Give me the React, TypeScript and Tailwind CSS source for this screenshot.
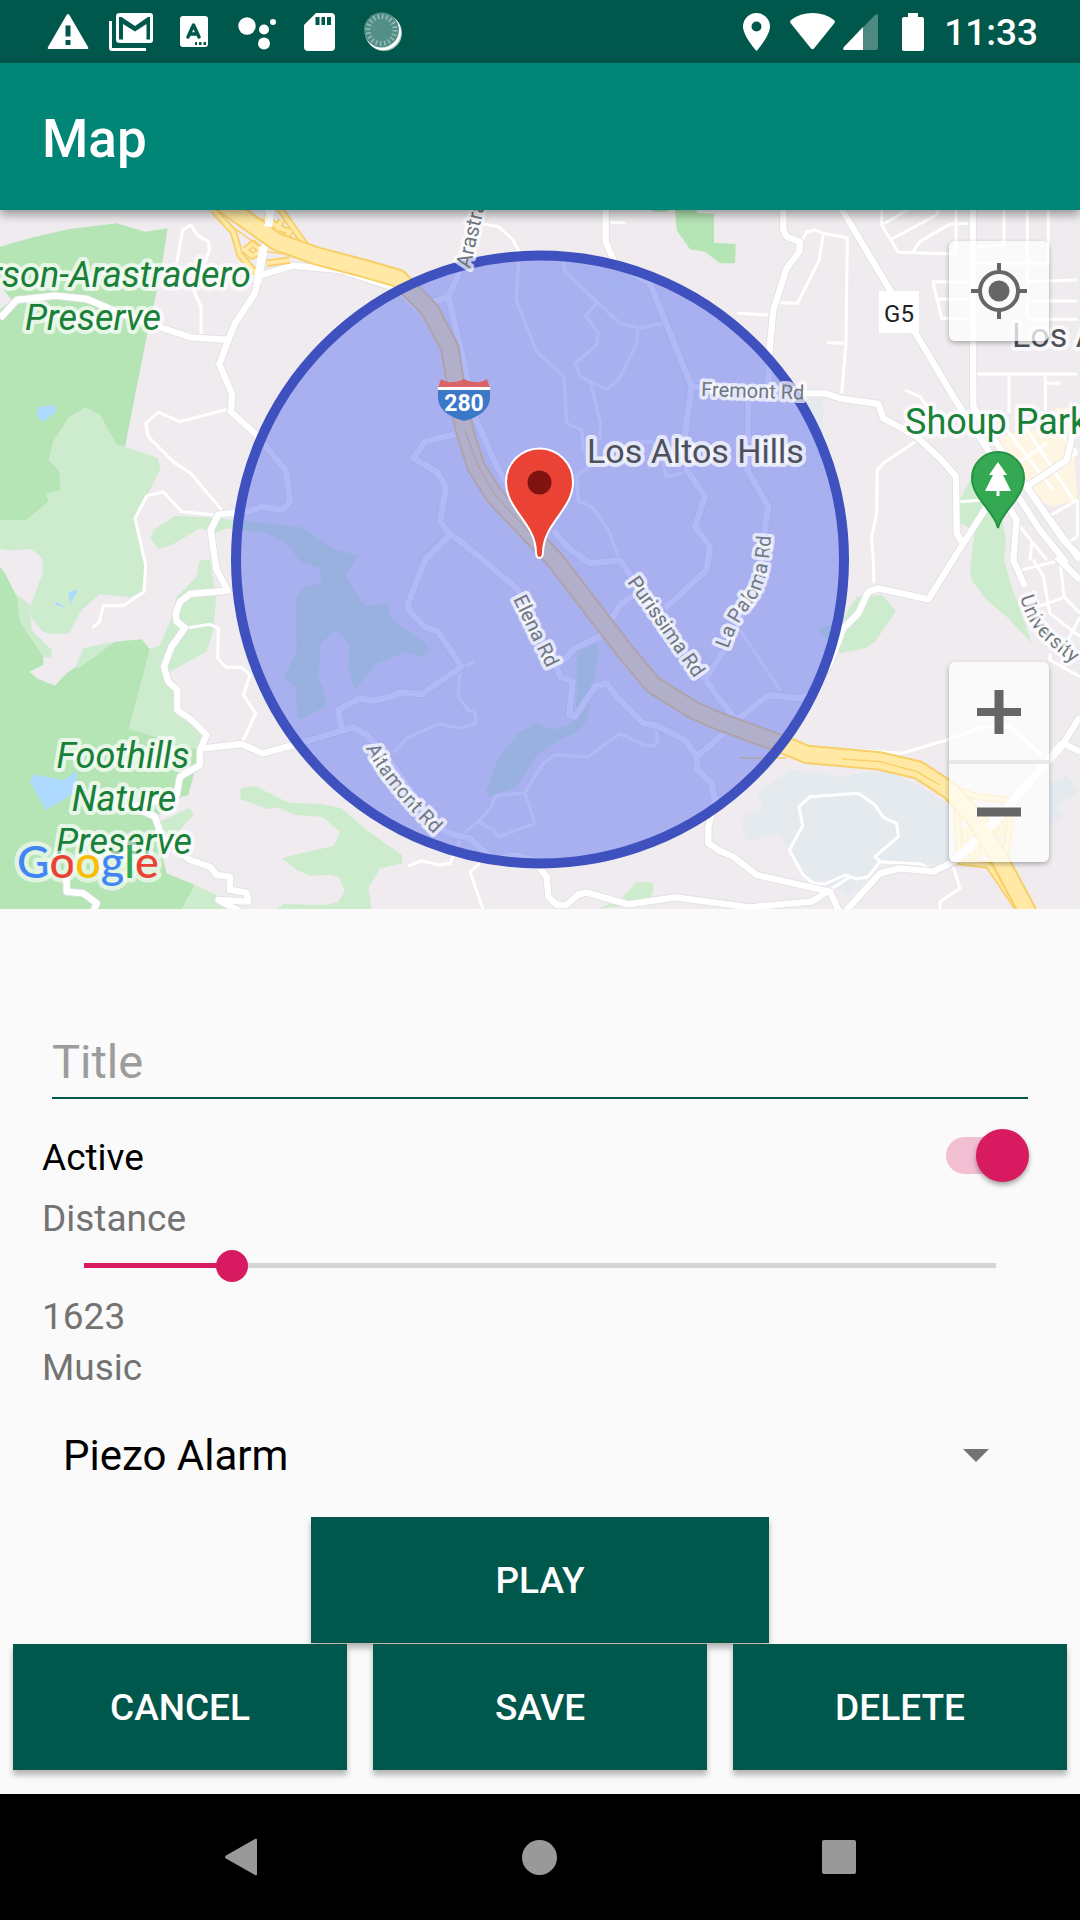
import React, { useState } from "react";

/* ---------- Map terrain (drawn on a 3x grid, scaled down by the parent group) ---------- */

const DARK_PARKS = [
  "M0,140 100,112 205,88 350,70 435,95 503,85 480,230 440,410 375,740 350,735 300,645 255,622 205,655 160,725 147,780 178,812 183,870 140,880 145,905 80,960 0,960 0,330 35,300 0,255Z",
  "M0,1100 15,1120 60,1210 60,1260 130,1370 130,1395 88,1415 110,1435 165,1457 200,1420 345,1325 425,1318 450,1348 388,1585 440,1602 600,1650 565,1785 530,1795 460,1860 470,1900 500,2020 585,2055 545,2127 0,2127Z",
  "M2025,30 2030,90 2070,148 2115,155 2160,190 2205,190 2207,132 2142,128 2142,42 2092,38 2090,30Z",
  "M1955,30 2005,30 2000,35 1960,35Z",
];

const LIGHT_PARKS = [
  "M375,740 472,773 482,805 440,890 405,955 440,1100 435,1170 390,1192 300,1182 245,1230 225,1265 208,1300 155,1302 130,1295 95,1255 90,1220 128,1120 128,1080 115,1062 90,1047 35,1052 0,1046 0,960 80,960 145,905 140,880 183,870 178,812 147,780 160,725 205,655 255,622 300,645 350,735Z",
  "M600,1080 630,1080 648,1200 640,1290 620,1355 510,1415 520,1480 530,1540 620,1610 600,1650 440,1602 388,1588 450,1348 480,1335 520,1240 530,1190 590,1130Z",
  "M40,1175 90,1215 95,1290 155,1350 155,1375 130,1370 60,1265 50,1190Z",
  "M228,1398 250,1345 345,1325 232,1408Z",
  "M470,1870 570,1823 580,1845 520,1910 480,1940Z",
  "M585,2055 650,2085 730,2127 545,2127Z",
  "M452,1015 460,990 525,948 640,953 905,982 1000,1045 1075,1068 1037,1125 1080,1200 1100,1217 1165,1210 1165,1240 1195,1275 1275,1325 1290,1350 1265,1372 1220,1355 1130,1390 1065,1470 1045,1410 1048,1335 1008,1290 963,1330 955,1430 975,1480 978,1518 910,1556 892,1550 888,1465 853,1435 890,1350 888,1200 905,1165 963,1147 960,1105 900,1085 865,1035 800,1000 730,990 680,985 645,1000 600,985 515,1035 475,1048Z",
  "M1730,1350 1785,1325 1798,1350 1782,1425 1780,1460 1760,1560 1740,1590 1660,1630 1610,1665 1550,1760 1465,1792 1458,1775 1495,1675 1560,1595 1610,1570 1655,1590 1720,1570 1732,1480Z",
  "M722,1765 765,1758 865,1808 965,1812 1025,1825 1100,1890 1205,1965 1208,1990 1140,2005 1105,2065 1115,2127 830,2127 850,2112 975,2115 1015,2105 1035,2070 1015,2030 985,2025 930,2027 890,2010 845,1975 880,1965 1000,1938 1020,1895 965,1850 885,1845 835,1822 805,1828 722,1798Z",
  "M1795,2127 1870,2090 1910,2045 1958,2048 1960,2080 1930,2110Z",
  "M2910,840 2960,850 3000,920 3018,1020 3012,1080 3035,1160 3065,1240 3095,1330 3020,1250 2960,1200 2915,1140 2910,1110 2925,990 2878,970 2880,900Z",
  "M2570,1190 2645,1185 2688,1232 2625,1325 2595,1345 2520,1360 2490,1330 2450,1285 2520,1270Z",
  "M2257,1848 2298,1827 2330,1880 2288,1905Z",
];

const CAMPUSES = [
  "M1835,210 1930,250 1875,300 1790,245Z",
  "M2415,600 2468,590 2470,650 2460,810 2410,800 2400,640Z",
  "M2370,1710 2440,1715 2520,1730 2600,1715 2670,1720 2760,1760 2850,1820 2850,1990 2780,1995 2640,1985 2600,2030 2580,2060 2545,2090 2500,2060 2460,2050 2400,2020 2370,1950 2330,1900 2240,1925 2225,1870 2235,1845 2290,1820 2270,1780Z",
  "M3150,1750 3200,1725 3235,1775 3170,1820 3190,1850 3150,1875Z",
];

const PONDS = [
  "M118,620 165,615 168,635 128,667 110,645Z",
  "M205,1177 235,1168 210,1212Z",
  "M165,1202 197,1223 168,1215Z",
  "M90,1745 100,1723 190,1740 230,1712 232,1770 190,1800 138,1830Z",
];

const DOWNTOWN =
  "M2990,720 3060,690 3160,680 3165,622 3210,625 3222,740 3232,900 3160,920 3120,905 3090,870 3060,850Z";

const ROADS = [
  "M812,20 790,170 775,230 765,280 705,370 685,420 658,492 697,585 692,635 770,705 858,812 870,905 845,930 785,920 745,935 655,943 632,990 645,1080 650,1110 683,1172 570,1182 540,1205 527,1240 530,1265 555,1283 515,1340 492,1400 505,1445 532,1470 532,1530 575,1560 620,1605 600,1650 600,1695 540,1730 530,1785 400,1820 465,1850 485,1910 570,1980 630,2000 650,2025 690,2030 690,2070 740,2078 745,2105 655,2100 720,2135",
  "M0,355 50,300 165,287 260,297 350,335 490,385 570,412 690,420",
  "M785,225 875,197 1020,210 1140,250 1190,265 1255,330",
  "M610,1645 725,1632 788,1660 900,1630 1060,1582 1100,1605 1160,1670 1310,1880 1350,1900 1410,1915 1480,1980 1540,1965 1600,1980 1640,2030 1645,2090 1670,2115 1700,2115 1735,2083 1760,2078 1885,2113 2025,2092 2250,2122 2435,2105 2490,2070",
  "M200,2030 200,2075 250,2080 290,2110 280,2135",
  "M1025,1585 1015,1530 1080,1495 1120,1502 1175,1490 1200,1477 1265,1482 1385,1400 1315,1295 1275,1280 1225,1230 1225,1210 1275,1080 1350,1005 1320,965 1338,860 1310,815 1240,775 1275,725 1375,700",
  "M1350,1000 1450,1080 1550,1165 1670,1400 1680,1430 1718,1445 1708,1545 1725,1550 1785,1460 1820,1450 1850,1490 1930,1570 1970,1577 2055,1620 2090,1670 2092,1710 2135,1750 2145,1800 2125,1880 2125,1930 2160,1953 2200,1970 2270,2025 2490,2075 2515,2130",
  "M1670,1400 1725,1345 1800,1310 1865,1210 1900,1185",
  "M1660,990 1700,1040 1770,1090 1860,1080 1900,1140 2110,1430 2160,1500 2210,1560 2305,1485 2400,1495 2430,1485 2490,1390 2530,1285 2575,1240 2605,1175 2635,1165 2785,1198 2865,1070 2960,920",
  "M1995,1225 2120,1110 2130,1040 2085,980 2115,890 2060,810 2055,700 2075,560 1950,250 1845,190 1817,125 1817,25",
  "M2090,1670 2160,1610 2210,1560",
  "M2075,560 2160,568 2410,580 2475,580 2520,595 2635,612 2650,655 2750,710 2825,780 2868,830 2870,1000 2885,1025",
  "M2245,600 2242,810 2305,920 2280,1080 2260,1180 2180,1340 2120,1430",
  "M2350,25 2350,90 2360,110 2400,125 2398,155 2360,205 2320,330 2308,460 2305,560",
  "M1380,215 1345,290 1390,480 1425,650 1490,800 1540,880",
  "M1300,305 1345,290",
  "M2518,15 2860,590 2990,790 3120,990 3200,1090",
  "M2918,20 2920,620 3010,760 3150,960 3240,1080",
  "M3220,690 3200,780 3080,860 3190,1020 3240,1070",
  "M3020,910 3050,960 3040,1080 3075,1160",
  "M3170,1070 3240,1140",
  "M3240,1550 3190,1630 3030,1820 2860,1985 2800,2015 2700,2005 2640,2020 2540,2130",
  "M3190,1630 3240,1655",
];

const LANES = [
  "M530,190 548,90 572,75 592,105 625,125 628,150 600,235 580,270 603,320 603,405",
  "M680,628 540,665 475,637 437,670 445,710 525,790 572,820 665,930",
  "M645,945 545,935 490,875 440,888 405,955 437,1095 432,1175 370,1217 310,1217 298,1265 278,1283",
  "M565,1283 630,1273 655,1285 653,1375 678,1402 725,1402 750,1425 730,1485 767,1540 725,1630",
  "M1440,70 1495,80 1535,115 1558,155 1548,300 1610,455 1692,530 1700,670 1745,690 1752,760",
  "M1690,185 1695,215 1790,305 1860,370 1920,385 1990,370",
  "M1790,310 1757,347 1795,400 1790,435 1725,490 1740,530 1820,568 1855,540 1910,430 1913,390",
  "M1770,545 1802,670 1800,720",
  "M1770,800 1730,825 1735,905 1775,920 1825,990 1855,1070",
  "M1910,725 1955,725 1980,760 2000,830 2050,820",
  "M1830,68 1877,68",
  "M1380,1400 1375,1490 1405,1530 1427,1540 1425,1570 1385,1585 1315,1572 1220,1615 1180,1658",
  "M1385,1400 1422,1388",
  "M1965,1580 1973,1620 1965,1638 1930,1635 1860,1600 1765,1670 1665,1665 1630,1690 1575,1778 1485,1788 1475,1820 1435,1865 1390,1900 1350,1990 1315,1995 1265,1982 1225,1998",
  "M1435,1865 1480,1890 1498,1910 1605,1870 1575,1778",
  "M1440,1990 1410,2015 1450,2130",
  "M2220,1290 2340,1470",
  "M2622,1150 2620,1080 2615,1010 2630,940 2632,810 2650,790 2745,725",
  "M2560,1650 2705,1660 2840,1620 2950,1580 3030,1580 3130,1670",
  "M2397,1820 2430,1790 2575,1780 2625,1815 2650,1852 2690,1870 2695,1910 2625,1970 2640,1985 2605,2030 2570,2037 2535,2025 2475,2052 2440,2050 2410,2025 2368,1950 2408,1877Z",
  "M2640,1985 2760,1992 2780,2000",
  "M2475,2080 2550,2030",
  "M2860,2000 2880,2065 2820,2105 2820,2130",
  "M2405,125 2420,95 2445,90 2470,100 2542,113 2538,430 2525,580",
  "M2470,100 2458,180 2392,310 2335,308",
  "M2212,340 2305,345",
  "M2482,428 2532,430",
  "M2645,25 2645,75 2695,157 2868,162 2868,25",
  "M2645,75 2730,25",
  "M2670,120 2810,45 2818,25",
  "M2735,160 2760,125 2850,72 2910,70",
  "M2795,245 2905,247M2800,250 2825,355 2910,357M2815,298 2910,298",
  "M3012,25 3012,135 2930,140M3082,25 3082,358 3232,358M3145,25 3145,190 2930,190M3082,245 3232,240M3082,303 3232,303",
  "M2930,522 3232,522M3027,522 3027,640M3136,522 3136,630M3136,550 3182,550",
  "M2715,570 2760,590 2780,620",
  "M3020,690 3160,870M3075,680 3220,900M3140,650 3232,760M3040,800 3140,730M3100,850 3230,760",
  "M2880,905 2950,900",
  "M3090,1080 3095,1030M3060,980 3140,1080M3145,950 3232,900M3232,1010 3200,1030M3232,900 3232,1010",
  "M3065,1110 3165,1085M3100,1080 3130,1130 3150,1240 3240,1310M3180,1080 3192,1190 3240,1240M3115,1220 3192,1192M3200,1330 3240,1250M3150,1360 3150,1380 3240,1430",
];

const FREEWAY =
  "M640,-10 830,125 950,168 1080,202 1195,235 1290,330 1350,445 1368,560 1393,690 1428,800 1485,890 1665,1080 1880,1360 1960,1455 2080,1530 2160,1565 2360,1638 2420,1663 2640,1683 2755,1710 2850,1772 2930,1860 3000,1980 3085,2140";

const RAMPS = [
  "M640,30 700,95 720,165 768,220",
  "M835,20 920,140",
  "M790,50 840,85 870,95 850,120",
  "M735,150 760,130 785,155 755,168 735,150",
  "M800,190 870,180",
  "M830,90 845,60",
  "M2850,1760 2930,1790 3020,1800 3030,1880 3010,2000",
  "M2870,1820 2880,1985 2965,1995 3050,2120",
  "M2895,1900 2910,1890 2915,1915 2895,1915Z",
  "M2915,1950 2930,1940 2935,1965 2915,1970Z",
  "M2975,1890 3000,1870 3010,1895 2990,1910Z",
];

function Terrain() {
  return (
    <g transform="translate(0 200) scale(0.33333)" strokeLinejoin="round">
      {DARK_PARKS.map((d) => <path key={d} d={d} fill="#b5e4b5" />)}
      {LIGHT_PARKS.map((d) => <path key={d} d={d} fill="#cdecce" />)}
      {CAMPUSES.map((d) => <path key={d} d={d} fill="#e4eaee" />)}
      {PONDS.map((d) => <path key={d} d={d} fill="#aedaff" />)}
      <path d={DOWNTOWN} fill="#fef5e3" />
      <g fill="none" stroke="#ffffff" strokeWidth="9">
        {LANES.map((d) => <path key={d} d={d} />)}
      </g>
      <g fill="none" stroke="#dfe0e4" strokeWidth="24">
        {ROADS.map((d) => <path key={d} d={d} />)}
      </g>
      <g fill="none" stroke="#ffffff" strokeWidth="19">
        {ROADS.map((d) => <path key={d} d={d} />)}
      </g>
      <g fill="none">
        {RAMPS.map((d) => <path key={d} d={d} stroke="#f8cf66" strokeWidth="22" />)}
        {RAMPS.map((d) => <path key={d} d={d} stroke="#ffe9a5" strokeWidth="12" />)}
        <path d={FREEWAY} stroke="#f8cf66" strokeWidth="58" />
        <path d={FREEWAY} stroke="#ffe9a5" strokeWidth="46" />
        <path d="M690,75 800,155 870,165M2220,1674 2360,1674M2525,1677 2640,1685 2750,1715 2820,1755" stroke="#f8cf66" strokeWidth="4" />
        <path d="M1395,690 1430,790 1485,885 1620,1030" stroke="#f8cf66" strokeWidth="4" />
        <path d="M812,20 805,80M790,140 772,250M3190,1630 2965,1885M2930,1920 2860,1985" stroke="#ffffff" strokeWidth="24" />
      </g>
    </g>
  );
}

function MapCanvas() {
  return (
    <svg
      viewBox="0 210 1080 699"
      preserveAspectRatio="xMidYMid slice"
      className="block size-full bg-[#efebef] font-[Roboto,sans-serif]"
      role="img"
      aria-label="Map of Los Altos Hills"
    >
      <Terrain />

      <circle cx="540" cy="559.5" r="304" fill="#6476ef" fillOpacity="0.5" stroke="#3f51bf" strokeWidth="10" />

      {/* Place labels */}
      <g stroke="#ffffff" strokeOpacity="0.7" strokeWidth="8" strokeLinejoin="round" paintOrder="stroke" fontSize="36">
        <g fill="#188038" fontStyle="italic">
          <text x="251" y="287" textAnchor="end">rson-Arastradero</text>
          <text x="93" y="330" textAnchor="middle">Preserve</text>
          <text x="123" y="768" textAnchor="middle">Foothills</text>
          <text x="124" y="811" textAnchor="middle">Nature</text>
          <text x="124" y="854" textAnchor="middle">Preserve</text>
        </g>
        <text x="905" y="434" fill="#188038">Shoup Park</text>
        <text x="587" y="463" fill="#4d515b" fontSize="34">Los Altos Hills</text>
        <text x="1012" y="347" fill="#4d515b" fontSize="34">Los A</text>
      </g>

      {/* Road labels */}
      <defs>
        <path id="la-paloma" d="M728,649 Q737,622 752,604 Q770,582 771,530" />
        <path id="altamont" d="M366,748 Q384,786 438,838" />
        <path id="university" d="M1020,597 Q1028,628 1048,643 Q1066,660 1092,676" />
      </defs>
      <g fill="#6f7780" stroke="#ffffff" strokeOpacity="0.7" strokeWidth="7" strokeLinejoin="round" paintOrder="stroke" fontSize="20">
        <text transform="translate(470 269) rotate(-77)" fontSize="21">Arastra</text>
        <text transform="translate(701 396) rotate(2)">Fremont Rd</text>
        <text transform="translate(513 599) rotate(64)">Elena Rd</text>
        <text transform="translate(627 582) rotate(55)">Purissima Rd</text>
        <text><textPath href="#la-paloma">La Paloma Rd</textPath></text>
        <text><textPath href="#altamont">Altamont Rd</textPath></text>
        <text><textPath href="#university">University</textPath></text>
      </g>

      {/* Route badges */}
      <rect x="879" y="291" width="40" height="42" fill="#ffffff" />
      <text x="899" y="322" textAnchor="middle" fontSize="24" fill="#202124">G5</text>
      <path d="M441,379 Q446,383 452,382 Q459,382 464,379 Q469,382 476,382 Q482,383 487,379 L490,388 H438Z" fill="#db6265" />
      <path d="M438,387 H490 V390 H438Z" fill="#ffffff" />
      <path d="M438,390 H490 V397 Q490,414 464,421 Q438,414 438,397Z" fill="#3c78c8" />
      <text x="464" y="411" textAnchor="middle" fontSize="23" fontWeight="700" fill="#ffffff">280</text>

      {/* Park pin */}
      <path d="M998,528 C995,512 972,498 972,478 A26,26 0 0 1 1024,478 C1024,498 1001,512 998,528Z" fill="#34a853" stroke="#249344" strokeWidth="2" />
      <path d="M998,462 L1007,475 H1003 L1011,491 H999.500 V496 H996.500 V491 H985 L993,475 H989Z" fill="#ffffff" />

      {/* Selected location pin */}
      <path d="M539.500,558 Q536,558 536,552 C535,522 506,510 506,482 A33.500,33.500 0 0 1 573,482 C573,510 544,522 543,552 Q543,558 539.500,558Z" fill="#ea4335" stroke="#ffffff" strokeWidth="2" />
      <circle cx="539.500" cy="482.500" r="12" fill="#7f1310" />

      {/* Attribution */}
      <text x="17" y="878" fontSize="45" fontWeight="500" fontFamily="Lato, sans-serif" stroke="#ffffff" strokeOpacity="0.6" strokeWidth="9" strokeLinejoin="round" paintOrder="stroke">
        <tspan fill="#4285f4">G</tspan>
        <tspan fill="#ea4335">o</tspan>
        <tspan fill="#fbbc05">o</tspan>
        <tspan fill="#4285f4">g</tspan>
        <tspan fill="#34a853">l</tspan>
        <tspan fill="#ea4335">e</tspan>
      </text>
    </svg>
  );
}

/* ---------- Status bar ---------- */

function Slot({ children }: { children: React.ReactNode }) {
  return <span className="flex w-[63px] justify-center">{children}</span>;
}

function StatusBar() {
  return (
    <div className="flex h-[63px] items-center justify-between bg-[#00574b] pr-[42px] pl-9 text-white">
      <div className="flex items-center">
        <Slot>
          <svg width="42" height="38" viewBox="0 0 42 38" fill="currentColor">
            <path fillRule="evenodd" d="M21 1 Q22 1 23 3 L41 34 Q42 36 40 36 H2 Q0 36 1 34 L19 3 Q20 1 21 1Z M18.500 12.500 H23.500 V23.500 H18.500Z M18.500 27 H23.500 V32 H18.500Z" />
          </svg>
        </Slot>
        <Slot>
          <svg width="46" height="40" viewBox="0 0 46 40" fill="currentColor">
            <path d="M1 9 H4 V36 H38 V39 H4 Q1 39 1 36Z" />
            <path fillRule="evenodd" d="M12 1 H42 Q45 1 45 4 V28 Q45 31 42 31 H12 Q8 31 8 28 V4 Q8 1 12 1Z M11 5 V27.500 H15 V12 L27 19.500 L38.500 12 V27.500 H42 V5 H40 L27 14 L13.500 5Z" />
          </svg>
        </Slot>
        <Slot>
          <svg width="30" height="32" viewBox="0 0 30 32">
            <rect x="1" y="0" width="28" height="31" rx="3" fill="currentColor" />
            <path d="M9 21 L14.500 9 L20 21 M11 18 H18" fill="none" stroke="#00574b" strokeWidth="3.500" strokeLinecap="round" strokeLinejoin="round" />
            <path d="M16 26 H18 V29 H16Z M20 26 H22.500 V29 H20Z M24.500 26 H27 V29 H24.500Z" fill="#00574b" />
          </svg>
        </Slot>
        <Slot>
          <svg width="38" height="38" viewBox="0 0 38 38" fill="currentColor">
            <circle cx="9" cy="13" r="8.700" />
            <circle cx="26" cy="16.500" r="5" />
            <circle cx="35" cy="9" r="3" />
            <circle cx="26" cy="30.500" r="6" />
          </svg>
        </Slot>
        <Slot>
          <svg width="31" height="38" viewBox="0 0 31 38">
            <path d="M12 0 H27 Q31 0 31 4 V34 Q31 38 27 38 H4 Q0 38 0 34 V12Z" fill="currentColor" />
            <path d="M11.500 4 H15.500 V12 H11.500Z M17.500 4 H21 V12 H17.500Z M23 4 H27 V12 H23Z" fill="#00574b" />
          </svg>
        </Slot>
        <Slot>
          <svg width="38" height="40" viewBox="0 0 38 40">
            <circle cx="20" cy="21" r="18" fill="#a5c5c0" />
            <circle cx="19" cy="20" r="18" fill="#ffffff" />
            <circle cx="17.500" cy="18" r="17.500" fill="#548f87" />
            <circle cx="17.500" cy="18" r="13.500" fill="none" stroke="#98bcb7" strokeWidth="5" strokeDasharray="1.500 2.741" />
          </svg>
        </Slot>
      </div>
      <div className="flex items-center">
        <svg width="27" height="38" viewBox="0 0 27 38" fill="currentColor">
          <path fillRule="evenodd" d="M13.500 0 A13.500 13.500 0 0 1 27 13.500 C27 23 13.500 38 13.500 38 C13.500 38 0 23 0 13.500 A13.500 13.500 0 0 1 13.500 0Z M13.500 8.500 A5 5 0 1 0 13.500 18.500 A5 5 0 1 0 13.500 8.500Z" />
        </svg>
        <svg width="45" height="37" viewBox="0 0 45 37" fill="currentColor" className="ml-5">
          <path d="M22.500 0 Q35 0 44 7 Q45.500 8.500 44.500 10 L24 35.500 Q22.500 37 21 35.500 L0.500 10 Q-0.500 8.500 1 7 Q10 0 22.500 0Z" />
        </svg>
        <svg width="35" height="36" viewBox="0 0 35 36" fill="currentColor" className="ml-2">
          <path d="M32 1 Q35 -1 35 2 V34 Q35 36 33 36 H2 Q-1 36 1 33Z" fillOpacity="0.3" />
          <path d="M20 13 V36 H2 Q-1 36 1 33Z" />
        </svg>
        <svg width="22" height="38" viewBox="0 0 22 38" fill="currentColor" className="ml-6">
          <path d="M6 0 H16 V4 H20 Q22 4 22 6 V36 Q22 38 20 38 H2 Q0 38 0 36 V6 Q0 4 2 4 H6Z" />
        </svg>
        <span className="ml-5 pt-0.5 text-[37px] leading-none font-medium">11:33</span>
      </div>
    </div>
  );
}

/* ---------- Screen ---------- */

const MAP_BUTTON = "flex h-[100px] w-[100px] items-center justify-center";
const ACTION =
  "h-[126px] bg-[#00574b] pt-0.5 text-[37px] font-medium text-white shadow-[0_5px_6px_rgba(0,0,0,0.28)]";

export default function App() {
  const [title, setTitle] = useState("");
  const [active, setActive] = useState(true);
  const [distance, setDistance] = useState(1623);

  return (
    <div className="flex min-h-screen flex-col bg-[#fafafa] font-[Roboto,sans-serif]">
      <StatusBar />
      <header className="relative z-10 flex h-[147px] items-center bg-[#008577] px-[42px] pt-1.5 shadow-[0_4px_10px_rgba(0,0,0,0.4)]">
        <h1 className="text-[53px] leading-none font-medium text-white">Map</h1>
      </header>

      <section className="relative aspect-[1080/699] w-full overflow-hidden">
        <MapCanvas />
        <button aria-label="My location" className={`${MAP_BUTTON} absolute top-[31px] right-[31px] rounded-md bg-white/75 shadow-[0_2px_5px_rgba(0,0,0,0.3)]`}>
          <svg width="56" height="56" viewBox="0 0 56 56" fill="none" stroke="#666666" strokeWidth="4">
            <circle cx="28" cy="28" r="19" />
            <circle cx="28" cy="28" r="10.500" fill="#666666" stroke="none" />
            <path d="M28 0 V8 M28 48 V56 M0 28 H8 M48 28 H56" />
          </svg>
        </button>
        <div className="absolute right-[31px] bottom-[47px] flex flex-col rounded-md bg-white/75 shadow-[0_2px_5px_rgba(0,0,0,0.3)]">
          <button aria-label="Zoom in" className={MAP_BUTTON}>
            <svg width="44" height="44" viewBox="0 0 44 44" fill="#666666">
              <path d="M17.500 0 H26.500 V18 H44 V26 H26.500 V44 H17.500 V26 H0 V18 H17.500Z" />
            </svg>
          </button>
          <div className="-my-0.5 h-1 bg-[#e4e4e4]/80" />
          <button aria-label="Zoom out" className={MAP_BUTTON}>
            <svg width="44" height="44" viewBox="0 0 44 44" fill="#666666">
              <path d="M0 17.500 H44 V26.500 H0Z" />
            </svg>
          </button>
        </div>
      </section>

      <form className="flex flex-col pt-[118px] pb-6" onSubmit={(e) => e.preventDefault()}>
        <input
          aria-label="Title"
          placeholder="Title"
          value={title}
          onChange={(e) => setTitle(e.target.value)}
          className="mx-[52px] h-[72px] border-b-2 border-[#00574b] bg-transparent pb-0.5 text-[47px] text-black outline-none placeholder:text-[#9c9c9c]"
        />

        <div className="mt-[18px] flex h-[76px] items-center justify-between pr-[51px] pl-[42px]">
          <label htmlFor="active" className="pt-1 text-[37px] leading-[51px] text-black">Active</label>
          <span className="relative flex h-[53px] w-[83px] items-center">
            <input
              id="active"
              type="checkbox"
              role="switch"
              checked={active}
              onChange={(e) => setActive(e.target.checked)}
              className="peer h-[37px] w-[74px] appearance-none rounded-full bg-[#c8c8c8] checked:bg-[#f2bfd2]"
            />
            <span className="pointer-events-none absolute left-0 size-[53px] rounded-full bg-[#f1f1f1] shadow-[0_3px_5px_rgba(0,0,0,0.35)] peer-checked:right-0 peer-checked:left-auto peer-checked:bg-[#d81b60]" />
          </span>
        </div>

        <label htmlFor="distance" className="px-[42px] text-[37px] leading-[51px] text-[#737373]">Distance</label>
        <div className="relative mx-[68px] mb-1 flex h-[43px] items-center px-4">
          <div className="h-[5px] w-full bg-[#d6d6d6]">
            <div className="h-full bg-[#d81b60]" style={{ width: `${distance / 100}%` }} />
          </div>
          <input
            id="distance"
            type="range"
            min={0}
            max={10000}
            value={distance}
            onChange={(e) => setDistance(Number(e.target.value))}
            className="absolute inset-0 m-0 h-full w-full appearance-none bg-transparent [&::-webkit-slider-thumb]:size-8 [&::-webkit-slider-thumb]:appearance-none [&::-webkit-slider-thumb]:rounded-full [&::-webkit-slider-thumb]:bg-[#d81b60]"
          />
        </div>
        <output htmlFor="distance" className="px-[42px] text-[37px] leading-[51px] text-[#737373]">{distance}</output>

        <label htmlFor="music" className="px-[42px] text-[37px] leading-[51px] text-[#737373]">Music</label>
        <div className="relative mx-[42px] flex h-[124px] items-center">
          <select id="music" className="h-full w-full appearance-none bg-transparent px-[21px] text-[42px] text-black outline-none">
            <option>Piezo Alarm</option>
          </select>
          <svg width="26" height="13" viewBox="0 0 26 13" className="pointer-events-none absolute right-[49px]" fill="#737373">
            <path d="M0 0 H26 L13 13Z" />
          </svg>
        </div>

        <button type="button" className={`${ACTION} mx-auto w-[458px]`}>PLAY</button>
        <div className="relative mt-px grid grid-cols-3 gap-[26px] px-[13px]">
          <button type="button" className={ACTION}>CANCEL</button>
          <button type="submit" className={ACTION}>SAVE</button>
          <button type="button" className={ACTION}>DELETE</button>
        </div>
      </form>

      <nav className="mt-auto grid h-[126px] grid-cols-3 bg-black px-[92px] text-[#999999]">
        <button aria-label="Back" className="flex items-center justify-center">
          <svg width="32" height="38" viewBox="0 0 32 38" fill="currentColor">
            <path d="M30 1 Q32 0 32 2 V36 Q32 38 30 37 L1 20.500 Q-1 19 1 17.500Z" />
          </svg>
        </button>
        <button aria-label="Home" className="flex items-center justify-center">
          <span className="size-[35px] rounded-full bg-current" />
        </button>
        <button aria-label="Recent apps" className="flex items-center justify-center">
          <span className="size-[34px] rounded-xs bg-current" />
        </button>
      </nav>
    </div>
  );
}
